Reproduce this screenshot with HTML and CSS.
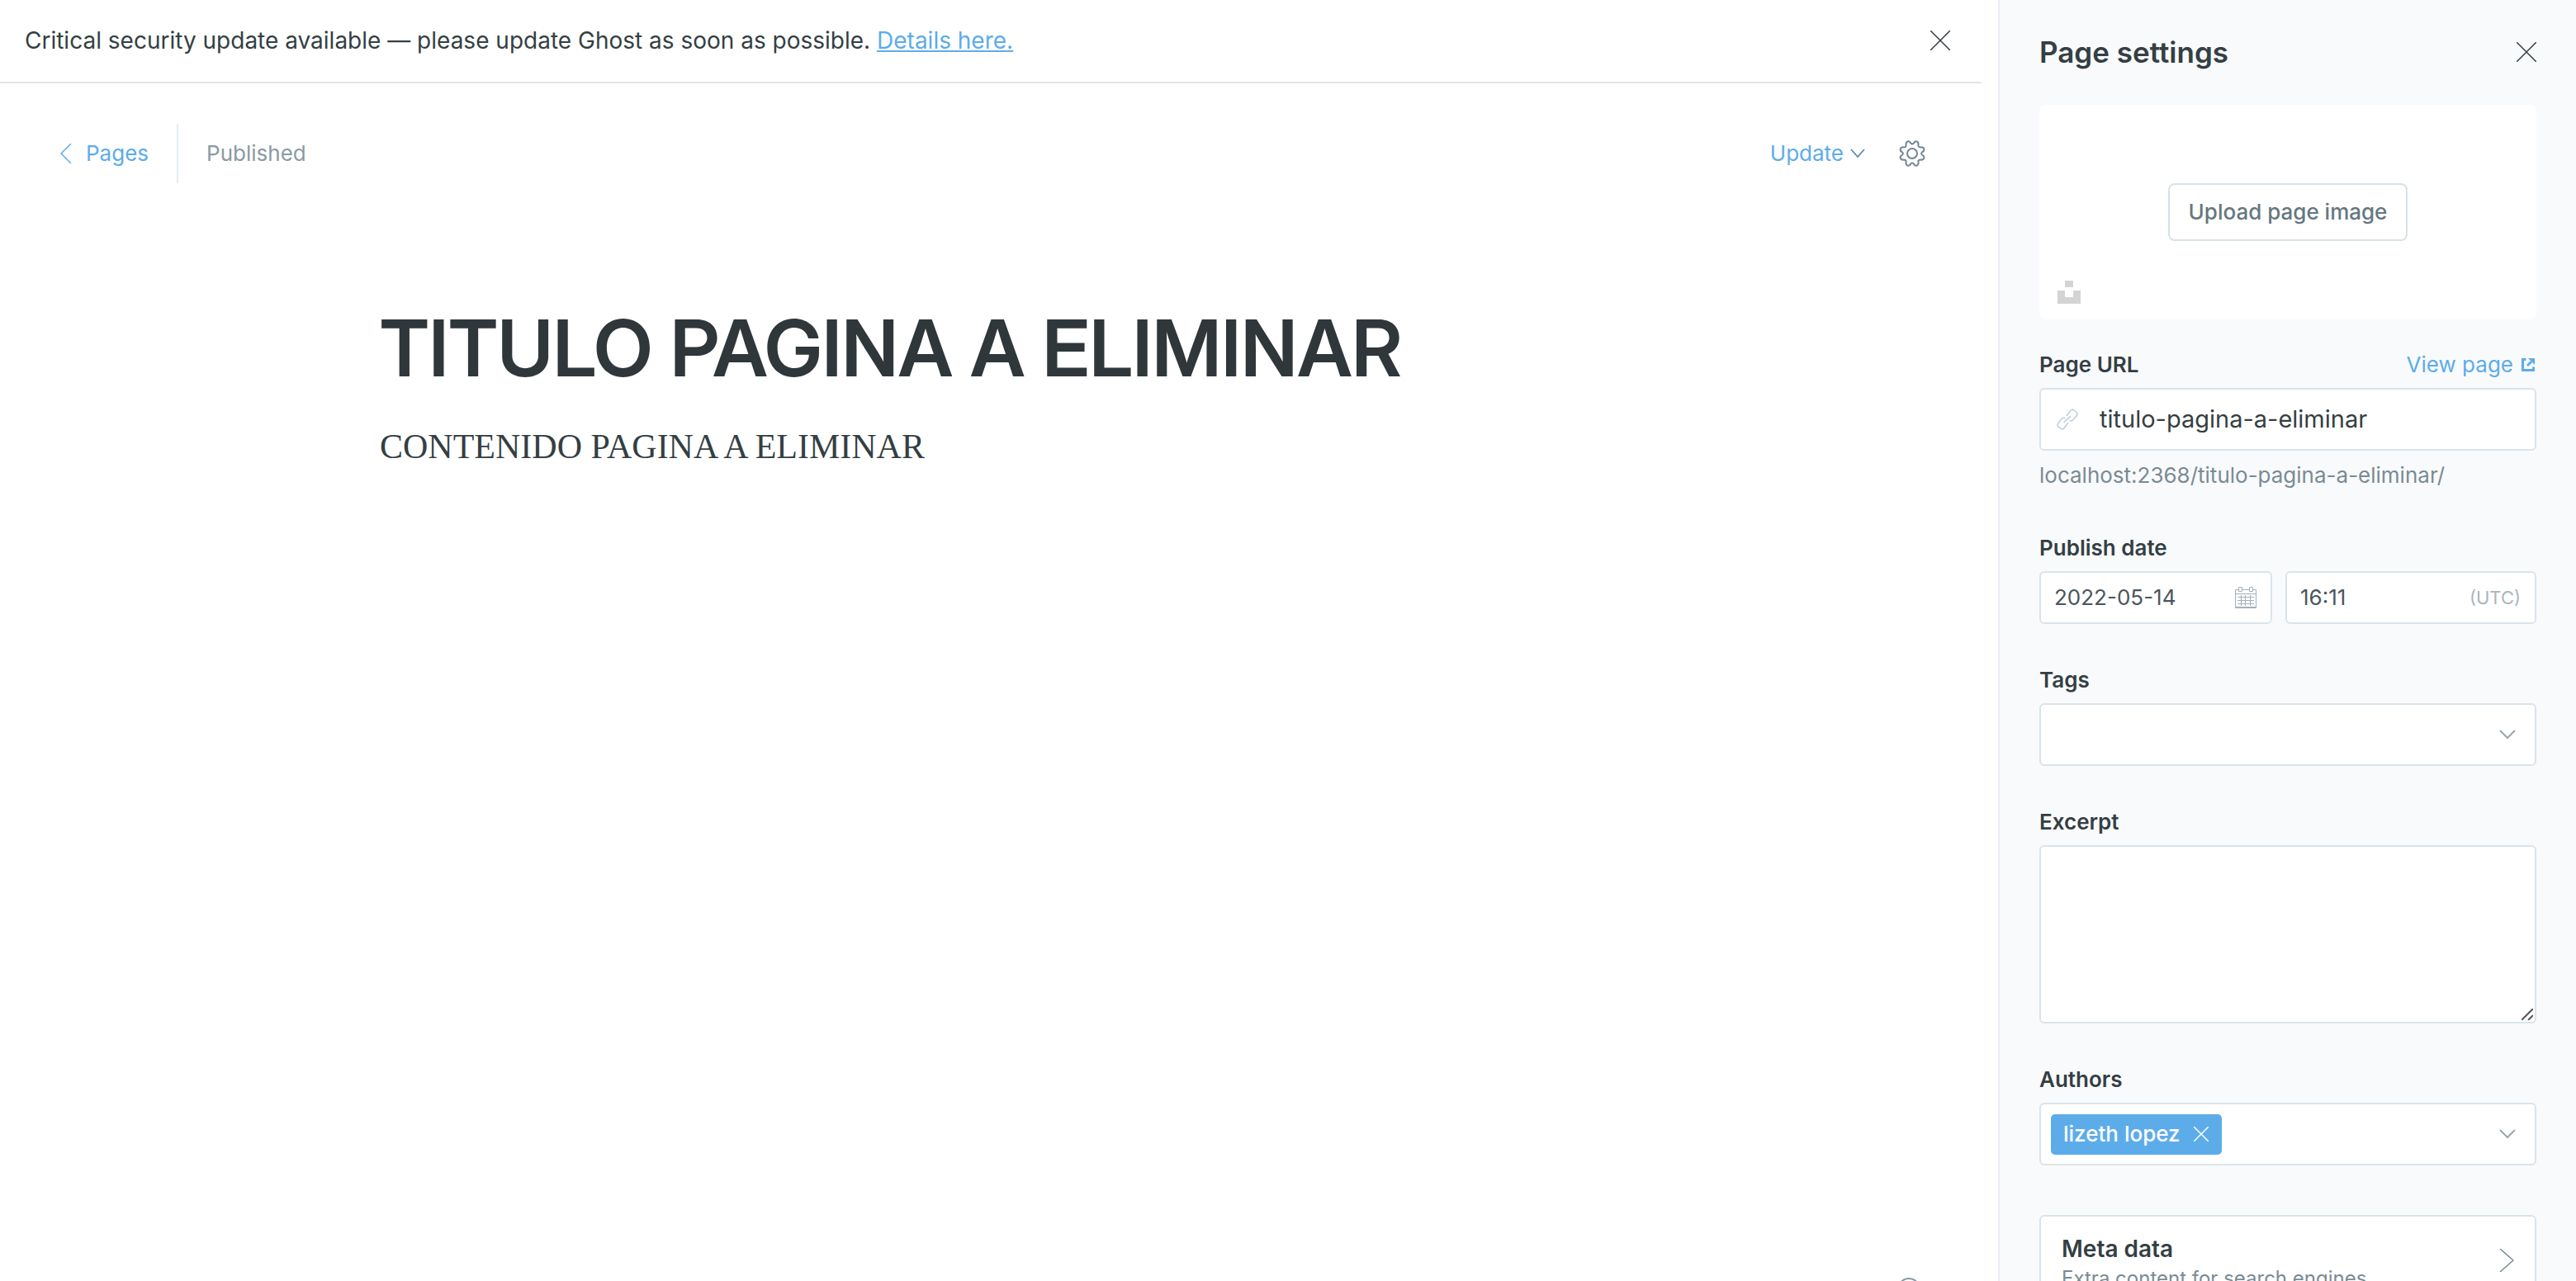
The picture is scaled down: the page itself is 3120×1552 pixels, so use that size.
FILE: index.html
```html
<!DOCTYPE html>
<html lang="en">
<head>
<meta charset="utf-8">
<title>Page editor</title>
<link rel="stylesheet" href="styles.css">
</head>
<body>
<div class="app">
  <main class="main">
    <aside class="banner">
      <p class="banner-text">Critical security update available — please update Ghost as soon as possible. <a href="#">Details here.</a></p>
      <button class="icon-button" type="button" aria-label="Dismiss"><svg class="icon-close" viewBox="0 0 24 24"><path d="M0 0l24 24M24 0L0 24"/></svg></button>
    </aside>
    <header class="toolbar">
      <a class="back" href="#"><svg class="icon-back" viewBox="0 0 14 24"><path d="M13 0L1 12l12 12"/></svg>Pages</a>
      <span class="status">Published</span>
      <button class="update" type="button">Update<svg class="icon-caret" viewBox="0 0 18 12"><path d="M1 1l8 9 8-9"/></svg></button>
      <button class="icon-button" type="button" aria-label="Settings"><svg class="icon-gear" viewBox="0 0 32 32"><circle cx="16" cy="16" r="6"/><path d="M13.5 2.600Q11.500 0 9.500 2Q8 3.500 8.600 6Q8.800 8.500 6 8.400Q2.500 8 1.700 10.500Q1 13 3.800 14.200Q6 16 3.800 17.800Q1 19 1.700 21.500Q2.500 24 6 23.600Q8.800 23.500 8.600 26Q8 28.500 9.500 30Q11.500 32 13.500 29.400Q16 25.500 18.500 29.400Q20.500 32 22.500 30Q24 28.500 23.400 26Q23.200 23.500 26 23.600Q29.500 24 30.300 21.500Q31 19 28.200 17.800Q26 16 28.200 14.200Q31 13 30.300 10.500Q29.500 8 26 8.400Q23.200 8.500 23.400 6Q24 3.500 22.500 2Q20.500 0 18.500 2.600Q16 6.500 13.500 2.600Z"/></svg></button>
    </header>
    <article class="editor">
      <h1>TITULO PAGINA A ELIMINAR</h1>
      <p>CONTENIDO PAGINA A ELIMINAR</p>
    </article>
    <button class="help" type="button" aria-label="Help"><svg class="icon-help" viewBox="0 0 28 28"><circle cx="14" cy="14" r="13"/></svg></button>
  </main>

  <section class="settings">
    <header class="settings-header">
      <h2>Page settings</h2>
      <button class="icon-button" type="button" aria-label="Close"><svg class="icon-close" viewBox="0 0 24 24"><path d="M0 0l24 24M24 0L0 24"/></svg></button>
    </header>
    <div class="upload">
      <button class="upload-button" type="button">Upload page image</button>
      <svg class="icon-unsplash" viewBox="0 0 28 28"><path d="M9 0h10v8H9zM0 12h9v8h10v-8h9v16H0z"/></svg>
    </div>

    <div class="field">
      <div class="label-row">
        <label for="url">Page URL</label>
        <a class="view" href="#">View page<svg class="icon-external" viewBox="0 0 16 16"><path d="M5.500 1.500h-4v13h13v-4M7 9l5-5"/><path class="solid" d="M8 0h8v8z"/></svg></a>
      </div>
      <div class="box box-tall box-url">
        <svg class="icon-link" viewBox="0 0 26 26"><path d="M12 9l4.500-6.200Q18.500 .3 21 2l2.500 2Q26 6 24.300 8.500L20 13.500Q18 15.500 15.500 14.500M17 9l-8.500 8M10.500 11.500Q8 10.500 6 12.500l-4.300 5.500Q0 20.500 2.500 22.500l2.500 1.700Q7.500 25.800 9.500 23.200L14 17"/></svg>
        <input class="input-large" id="url" type="text" value="titulo-pagina-a-eliminar">
      </div>
      <p class="hint">localhost:2368/titulo-pagina-a-eliminar/</p>
    </div>

    <div class="field">
      <label for="date">Publish date</label>
      <div class="date-row">
        <div class="box">
          <input id="date" type="text" value="2022-05-14">
          <svg class="icon-calendar" viewBox="0 0 26 26"><path d="M4 3.500H.5v22h25v-22H22M8 3.500h10M.5 8.500h25M.5 24.500h25M3 12.500h20M3 16.500h20M3 20.500h20M7.500 10v13M12.500 10v13M18.500 10v13M4.500 .5h4v5h-4zM17.500 .5h4v5h-4z"/></svg>
        </div>
        <div class="box">
          <input id="time" type="text" value="16:11" aria-label="Publish time">
          <span class="zone">(UTC)</span>
        </div>
      </div>
    </div>

    <div class="field">
      <label for="tags">Tags</label>
      <div class="box box-tall box-select">
        <select id="tags"><option></option></select>
        <svg class="icon-chevron" viewBox="0 0 20 12"><path d="M1 1l9 9 9-9"/></svg>
      </div>
    </div>

    <div class="field">
      <label for="excerpt">Excerpt</label>
      <div class="excerpt">
        <textarea id="excerpt"></textarea>
        <svg class="icon-resize" viewBox="0 0 14 14"><path d="M0 14L14 0M8 14l6-6"/></svg>
      </div>
    </div>

    <div class="field field-last">
      <label for="authors">Authors</label>
      <div class="box box-tall box-select">
        <span class="token">lizeth lopez<button class="icon-button" type="button" aria-label="Remove"><svg class="icon-remove" viewBox="0 0 18 18"><path d="M0 0l18 18M18 0L0 18"/></svg></button></span>
        <input id="authors" type="text">
        <svg class="icon-chevron" viewBox="0 0 20 12"><path d="M1 1l9 9 9-9"/></svg>
      </div>
    </div>

    <button class="meta" type="button">
      <span class="meta-text"><strong>Meta data</strong><span>Extra content for search engines</span></span>
      <svg class="icon-next" viewBox="0 0 18 28"><path d="M1 0l16 14L1 28"/></svg>
    </button>
  </section>
</div>
</body>
</html>
```
FILE: styles.css
```css
* { box-sizing: border-box; }
body {
  margin: 0;
  font: 26px/32px Inter, "Liberation Sans", sans-serif;
  color: #343f44;
  background: #fff;
}
h1, h2, p { margin: 0; }
a { color: #5dacea; text-decoration: none; }
button { padding: 0; border: 0; background: none; font: inherit; color: inherit; }
svg { display: block; flex: none; fill: none; stroke: currentColor; stroke-width: 2; }
input, select, textarea {
  flex: 1;
  min-width: 0;
  padding: 0;
  border: 0;
  outline: 0;
  background: none;
  font: inherit;
  color: #4a565c;
}

.app { display: flex; height: 100vh; overflow: hidden; }

.main { flex: 1; min-width: 0; display: flex; flex-direction: column; }
.banner {
  display: flex;
  align-items: center;
  justify-content: space-between;
  height: 101px;
  margin-right: 20px;
  padding: 0 38px 2px 30px;
  border-bottom: 2px solid #e3e4e4;
}
.banner-text { font-size: 28px; }
.banner-text a { text-decoration: underline; }
.toolbar { display: flex; align-items: center; height: 169px; padding: 0 88px 0 73px; }
.back { display: flex; align-items: center; gap: 17px; }
.status {
  flex: 1;
  margin-left: 34px;
  padding: 20px 0 20px 34px;
  border-left: 2px solid #e5edf2;
  color: #8a9aa4;
}
.update { display: flex; align-items: center; gap: 8px; margin-right: 41px; color: #5dacea; }
.editor { flex: 1; padding: 94px 460px 0; }
.editor h1 {
  font-family: "Inter Display", Inter, "Liberation Sans", sans-serif;
  font-size: 95px;
  line-height: 116px;
  font-weight: 600;
  color: #2f373b;
}
.editor p { margin-top: 36px; font: 42px/50px "Liberation Serif", serif; }
.help { align-self: flex-end; height: 4px; margin-right: 94px; color: #8a9aa4; }

.settings {
  flex: none;
  width: 700px;
  padding: 0 48px;
  border-left: 2px solid #e5edf2;
  background: #f9fafc;
}
.settings-header { display: flex; align-items: center; justify-content: space-between; height: 127px; padding-bottom: 2px; }
.settings h2 { font-size: 35px; line-height: 42px; font-weight: 600; }
.upload {
  position: relative;
  display: flex;
  align-items: center;
  justify-content: center;
  height: 260px;
  margin-bottom: 39px;
  border-radius: 8px;
  background: #fff;
}
.upload-button {
  height: 70px;
  padding: 0 23px;
  border: 2px solid #d7e2e7;
  border-radius: 8px;
  font-weight: 500;
  color: #66777f;
}

.field { margin-bottom: 52px; }
.field-last { margin-bottom: 60px; }
.field label { display: block; margin-bottom: 12px; font-weight: 600; }
.label-row { display: flex; align-items: flex-start; justify-content: space-between; }
.view { display: flex; align-items: center; gap: 10px; padding-right: 2px; }
.box {
  display: flex;
  align-items: center;
  height: 64px;
  padding: 0 17px 0 16px;
  border: 2px solid #d9e4ea;
  border-radius: 6px;
  background: #fff;
}
.box-tall { height: 76px; }
.box-url { padding: 0 19px; }
.box-select { padding: 0 23px 0 12px; }
.box .input-large { margin-left: 26px; font-size: 29px; color: #343f44; }
.box select { appearance: none; align-self: stretch; }
.hint { margin-top: 14px; padding-bottom: 4px; color: #7a8b94; }
.date-row { display: grid; grid-template-columns: 282px minmax(0, 1fr); gap: 16px; }
.zone { font-size: 22px; color: #a9b6bc; }
.excerpt { position: relative; display: flex; }
.excerpt textarea {
  height: 216px;
  padding: 12px 17px;
  border: 2px solid #d9e4ea;
  border-radius: 6px;
  background: #fff;
  resize: none;
}
.token {
  display: flex;
  align-items: center;
  gap: 16px;
  height: 49px;
  padding: 0 16px 0 15px;
  border-radius: 5px;
  background: #5dacea;
  color: #fff;
  font-weight: 500;
}
.meta {
  display: flex;
  align-items: center;
  justify-content: space-between;
  width: 100%;
  height: 112px;
  padding: 4px 25px 0;
  border: 2px solid #d9e4ea;
  border-radius: 6px;
  background: #fff;
  text-align: left;
  color: #7a8b94;
}
.meta-text { display: grid; gap: 2px; font-size: 24px; }
.meta strong { font-size: 28px; line-height: 36px; font-weight: 600; color: #343f44; }

.icon-close { width: 24px; height: 24px; stroke-width: 1.5; }
.icon-back { width: 14px; height: 24px; stroke-width: 1.5; }
.icon-caret { width: 18px; height: 12px; color: #5480a0; stroke-width: 1.5; }
.icon-gear { width: 32px; height: 32px; color: #738690; }
.icon-unsplash {
  position: absolute;
  left: 22px;
  bottom: 19px;
  width: 28px;
  height: 28px;
  fill: #d4d4d4;
  stroke: none;
}
.icon-external { width: 16px; height: 16px; stroke-width: 3; }
.icon-external .solid { fill: currentColor; stroke: none; }
.icon-link { width: 26px; height: 26px; color: #bccdd7; stroke-width: 1.5; }
.icon-calendar { width: 26px; height: 26px; color: #a3b0b7; stroke-width: 1; }
.icon-chevron { width: 20px; height: 12px; color: #98a7af; }
.icon-resize {
  position: absolute;
  right: 4px;
  bottom: 4px;
  width: 14px;
  height: 14px;
  color: #555;
}
.icon-remove { width: 18px; height: 18px; stroke-width: 1.5; }
.icon-next { width: 18px; height: 28px; margin-bottom: 6px; color: #7a8b94; stroke-width: 1.5; }
.icon-help { width: 28px; height: 28px; }
```
